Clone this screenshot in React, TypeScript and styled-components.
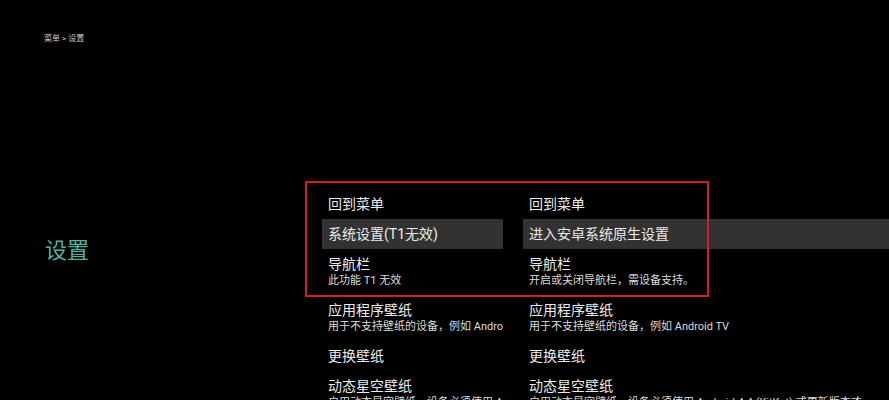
import styled, { createGlobalStyle } from 'styled-components';

const GlobalStyle = createGlobalStyle`
  html, body {
    margin: 0;
    padding: 0;
    background: #000;
    overflow: hidden;
  }
  body {
    font-family: Roboto, "Noto Sans CJK SC", sans-serif;
    color: #e6e6e6;
  }
`;

const Screen = styled.div`
  position: relative;
  width: 889px;
  height: 400px;
  background: #000;
`;

const Breadcrumb = styled.div`
  padding: 33px 0 0 44px;
  font-size: 8px;
  line-height: 12px;
  color: #c8c8c8;
`;

const Main = styled.div`
  display: flex;
  margin-top: 144px;
`;

const Sidebar = styled.div`
  width: 277px;
  flex-shrink: 0;
  padding-left: 45px;
`;

const Heading = styled.h1`
  margin: 47px 0 0;
  font-size: 22px;
  line-height: 30px;
  font-weight: 400;
  color: #4fb3a3;
`;

const Columns = styled.div`
  flex: 1;
  display: grid;
  grid-template-columns: 181px 1fr;
  column-gap: 20px;
`;

const Column = styled.div`
  display: flex;
  flex-direction: column;
  overflow: hidden;
`;

const Row = styled.div<{ $active?: boolean }>`
  padding: 7px 0 6px 6px;
  background: ${p => (p.$active ? '#323232' : 'transparent')};
  white-space: nowrap;
  overflow: hidden;
`;

const Title = styled.div`
  font-size: 14px;
  line-height: 17px;
  color: #ececec;
`;

const Sub = styled.div`
  font-size: 11px;
  line-height: 16px;
  color: #dcdcdc;
`;

const Marker = styled.div`
  position: absolute;
  left: 305px;
  top: 181px;
  width: 400px;
  height: 112px;
  border: 2px solid #cc1f28;
  pointer-events: none;
`;

type Item = { title: string; sub?: string; active?: boolean };

const left: Item[] = [
  { title: '回到菜单' },
  { title: '系统设置(T1无效)', active: true },
  { title: '导航栏', sub: '此功能 T1 无效' },
  { title: '应用程序壁纸', sub: '用于不支持壁纸的设备，例如 Android TV' },
  { title: '更换壁纸' },
  { title: '动态星空壁纸', sub: '启用动态星空壁纸，设备必须使用 Android 4.4 (KitKat) 或更新版本' },
];

const right: Item[] = [
  { title: '回到菜单' },
  { title: '进入安卓系统原生设置', active: true },
  { title: '导航栏', sub: '开启或关闭导航栏，需设备支持。' },
  { title: '应用程序壁纸', sub: '用于不支持壁纸的设备，例如 Android TV' },
  { title: '更换壁纸' },
  { title: '动态星空壁纸', sub: '启用动态星空壁纸，设备必须使用 Android 4.4 (KitKat) 或更新版本才' },
];

const List = ({ items }: { items: Item[] }) => (
  <Column>
    {items.map(it => (
      <Row key={it.title} $active={it.active}>
        <Title>{it.title}</Title>
        {it.sub && <Sub>{it.sub}</Sub>}
      </Row>
    ))}
  </Column>
);

const App = () => (
  <Screen>
    <GlobalStyle />
    <Breadcrumb>菜单 &gt; 设置</Breadcrumb>
    <Main>
      <Sidebar>
        <Heading>设置</Heading>
      </Sidebar>
      <Columns>
        <List items={left} />
        <List items={right} />
      </Columns>
    </Main>
    <Marker />
  </Screen>
);

export default App;
